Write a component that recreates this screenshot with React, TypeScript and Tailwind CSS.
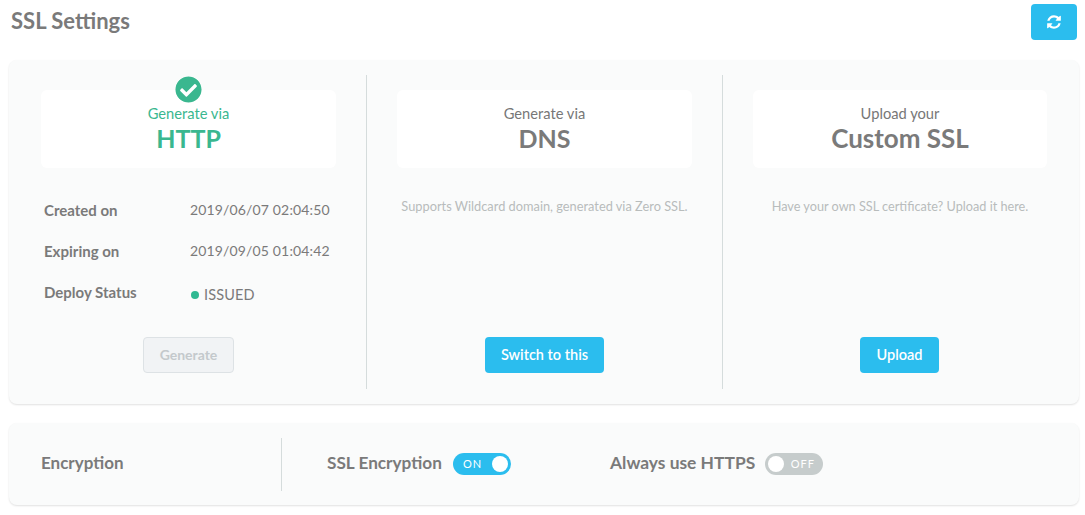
import React from 'react';
import { FaCheckCircle } from 'react-icons/fa';

// FontAwesome 4 style refresh icon
function RefreshIcon() {
    return (
        <svg width="16" height="16" viewBox="0 0 1792 1792" fill="currentColor">
            <path d="M1639 1056q0 5-1 7-64 268-268 434.5t-478 166.5q-146 0-282.5-55t-243.5-157l-129 129q-19 19-45 19t-45-19-19-45v-448q0-26 19-45t45-19h448q26 0 45 19t19 45-19 45l-137 137q71 66 161 102t187 36q134 0 250-65t186-179q11-17 53-117 8-23 30-23h192q13 0 22.5 9.5t9.5 22.5zm25-800v448q0 26-19 45t-45 19h-448q-26 0-45-19t-19-45 19-45l138-138q-148-137-349-137-134 0-250 65t-186 179q-11 17-53 117-8 23-30 23h-199q-13 0-22.5-9.5t-9.5-22.5v-7q65-268 270-434.5t480-166.5q146 0 284 55.5t245 156.5l130-129q19-19 45-19t45 19 19 45z" />
        </svg>
    );
}

function Option({ top, title, active, wide }: { top: string; title: string; active?: boolean; wide?: boolean }) {
    return (
        <div className="relative h-[78px] rounded-md bg-white flex flex-col items-center pt-[14px]">
            {active && (
                <FaCheckCircle className="absolute top-[-14px] left-[134px] text-[#3ab78f] bg-white rounded-full" size={27} />
            )}
            <p className={`text-[14.7px] leading-[19px] ${active ? 'text-[#3ab78f]' : 'text-[#777777]'}`}>{top}</p>
            <p className={`${wide ? 'text-[26px]' : 'text-[25px]'} leading-[32px] mt-[-1px] font-bold ${active ? 'text-[#3ab78f]' : 'text-[#7a7a7a]'}`}>{title}</p>
        </div>
    );
}

function Toggle({ on }: { on: boolean }) {
    return (
        <div className={`relative w-[58px] h-[22px] rounded-full flex items-center ${on ? 'bg-[#2bbdee]' : 'bg-[#c6cccc]'}`}>
            <span className={`absolute top-[3px] w-[16px] h-[16px] rounded-full bg-white ${on ? 'right-[3px]' : 'left-[3px]'}`} />
            <span className={`absolute text-[11px] tracking-[1px] text-white ${on ? 'left-[10px]' : 'right-[8px]'}`}>{on ? 'ON' : 'OFF'}</span>
        </div>
    );
}

function InfoRow({ label, children, className }: { label: string; children: React.ReactNode; className?: string }) {
    return (
        <div className={`flex ${className ?? ''}`}>
            <div className="w-[146px] text-[15px] font-bold text-[#7a7a7a] leading-[20px]">{label}</div>
            <div className="text-[14px] text-[#7a7a7a] leading-[20px] tracking-[0.15px]">{children}</div>
        </div>
    );
}

export default function App() {
    return (
        <div className="w-[1085px] h-[515px] bg-white font-['Lato','Liberation_Sans',sans-serif] overflow-hidden">
            {/* Header */}
            <div className="flex justify-between items-start pl-[11px] pr-[8px] pt-[4px] h-[60px]">
                <h1 className="text-[22px] font-bold text-[#7a7a7a] leading-[36px] mt-[-1px]">SSL Settings</h1>
                <button className="w-[46px] h-[36px] rounded bg-[#2bbdee] text-white flex items-center justify-center">
                    <RefreshIcon />
                </button>
            </div>

            {/* SSL options */}
            <div className="ml-[9px] mr-[6px] h-[344px] rounded-lg bg-[#fafbfb] shadow-[0_1px_2px_rgba(0,0,0,0.12)] py-[15px] flex">
                <div className="w-[358px] border-r border-[#d5dcdc] pl-[32px] pr-[30px] pt-[15px] flex flex-col">
                    <Option top="Generate via" title="HTTP" active />
                    <InfoRow label="Created on" className="mt-[32px] pl-[3px]">2019/06/07 02:04:50</InfoRow>
                    <InfoRow label="Expiring on" className="mt-[21px] pl-[3px]">2019/09/05 01:04:42</InfoRow>
                    <InfoRow label="Deploy Status" className="mt-[21px] pl-[3px]">
                        <span className="flex items-center gap-[5px] mt-[3px] text-[14.5px]">
                            <span className="w-[8px] h-[8px] rounded-full bg-[#2fb992] ml-[1px]" />
                            ISSUED
                        </span>
                    </InfoRow>
                    <div className="flex justify-center mt-[32px]">
                        <button className="w-[91px] h-[36px] pb-[1px] rounded border border-[#dde2e5] bg-[#f1f3f5] text-[14px] font-bold text-[#c4c9cc]">Generate</button>
                    </div>
                </div>
                <div className="w-[356px] border-r border-[#d5dcdc] px-[30px] pt-[15px] flex flex-col">
                    <Option top="Generate via" title="DNS" />
                    <p className="mt-[29px] text-[12.8px] text-[#b8bcbc] text-center leading-[18px]">Supports Wildcard domain, generated via Zero SSL.</p>
                    <div className="flex justify-center mt-auto mb-[16px]">
                        <button className="w-[119px] h-[36px] rounded bg-[#2bbdee] text-[14.5px] font-semibold text-white">Switch to this</button>
                    </div>
                </div>
                <div className="flex-1 pl-[30px] pr-[32px] pt-[15px] flex flex-col">
                    <Option top="Upload your" title="Custom SSL" wide />
                    <p className="mt-[29px] text-[12.7px] text-[#b8bcbc] text-center leading-[18px]">Have your own SSL certificate? Upload it here.</p>
                    <div className="flex justify-center mt-auto mb-[16px]">
                        <button className="w-[79px] h-[36px] mr-[1px] rounded bg-[#2bbdee] text-[14.5px] font-semibold text-white">Upload</button>
                    </div>
                </div>
            </div>

            {/* Encryption */}
            <div className="ml-[9px] mr-[6px] mt-[19px] h-[82px] rounded-lg bg-[#fafbfb] shadow-[0_1px_2px_rgba(0,0,0,0.12)] flex items-center">
                <div className="w-[273px] h-[53px] border-r border-[#d5dcdc] pl-[32px] pb-[2px] flex items-center text-[17px] font-bold text-[#7a7a7a]">Encryption</div>
                <div className="flex items-center pl-[45px]">
                    <span className="w-[126px] text-[17.2px] font-bold text-[#7a7a7a] mt-[-2px]">SSL Encryption</span>
                    <Toggle on />
                    <span className="w-[155px] ml-[99px] text-[17.4px] font-bold text-[#7a7a7a] mt-[-2px]">Always use HTTPS</span>
                    <Toggle on={false} />
                </div>
            </div>
        </div>
    );
}
